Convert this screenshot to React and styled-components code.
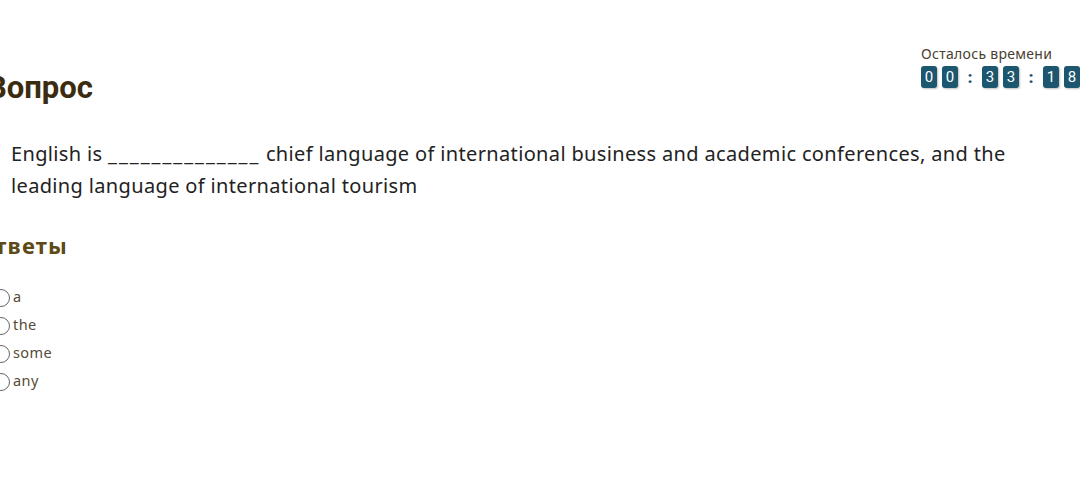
import styled, { createGlobalStyle } from 'styled-components'

const GlobalStyle = createGlobalStyle`
    html, body {
        margin: 0;
        padding: 0;
        background: #fff;
        overflow: hidden;
    }
    body {
        font-family: "Noto Sans", "Liberation Sans", sans-serif;
    }
`

const Pagina = styled.main`
    margin-left: -10px;
    width: 1090px;
    padding-top: 45px;
`

const Cabecalho = styled.header`
    display: flex;
    justify-content: space-between;
    align-items: flex-start;
`

const Titulo = styled.h2`
    font-family: Roboto, "Liberation Sans", sans-serif;
    font-weight: 700;
    font-size: 31px;
    line-height: 40px;
    color: #3b2c0f;
    margin: 23px 0 0 -3px;
`

const Cronometro = styled.div`
    display: flex;
    flex-direction: column;
    width: 159px;
`

const Rotulo = styled.span`
    font-size: 14px;
    line-height: 18px;
    color: #4a4030;
    margin-bottom: 3px;
    letter-spacing: 0.3px;
`

const Digitos = styled.div`
    display: flex;
    align-items: center;
`

const Digito = styled.span`
    width: 16px;
    height: 22px;
    margin-right: ${props => props.$ultimo ? '0' : '5px'};
    border-radius: 3px;
    background: #1c566f;
    color: #fff;
    font-family: Roboto, sans-serif;
    font-size: 15px;
    display: flex;
    align-items: center;
    justify-content: center;
    box-shadow: 1px 1px 2px rgba(0, 0, 0, 0.25);
`

const DoisPontos = styled.span`
    width: 24px;
    margin-left: -5px;
    text-align: center;
    font-family: Roboto, sans-serif;
    font-weight: 900;
    font-size: 17px;
    color: #1c566f;
`

const Pergunta = styled.p`
    margin: 30px 0 0 21px;
    width: 1040px;
    font-size: 20px;
    line-height: 32px;
    letter-spacing: 0.35px;
    color: #222;
`

const Lacuna = styled.span`
    letter-spacing: 2px;
`

const Subtitulo = styled.h3`
    font-weight: 700;
    font-size: 22px;
    line-height: 26px;
    letter-spacing: 1.2px;
    color: #5e4a17;
    margin: 30px 0 0 -13px;
`

const Respostas = styled.ul`
    list-style: none;
    margin: 24px 0 0 0;
    padding: 0 0 0 2px;
`

const Resposta = styled.li`
    display: flex;
    align-items: center;
    height: 28px;
    font-size: 14.5px;
    letter-spacing: 0.4px;
    color: #554a35;
`

const Radio = styled.span`
    width: 16px;
    height: 16px;
    border: 1px solid #666;
    border-radius: 50%;
    margin-right: 3px;
    margin-top: 4px;
    flex-shrink: 0;
`

const tempo = [['0', '0'], ['3', '3'], ['1', '8']]
const opcoes = ['a', 'the', 'some', 'any']

function App() {
    return (
        <Pagina>
            <GlobalStyle />
            <Cabecalho>
                <Titulo>Вопрос</Titulo>
                <Cronometro>
                    <Rotulo>Осталось времени</Rotulo>
                    <Digitos>
                        {tempo.map((par, i) => (
                            <>
                                {i > 0 && <DoisPontos>:</DoisPontos>}
                                <Digito>{par[0]}</Digito>
                                <Digito $ultimo={i === tempo.length - 1}>{par[1]}</Digito>
                            </>
                        ))}
                    </Digitos>
                </Cronometro>
            </Cabecalho>
            <Pergunta>
                English is <Lacuna>______________</Lacuna> chief language of international business and academic conferences, and the leading language of international tourism
            </Pergunta>
            <Subtitulo>Ответы</Subtitulo>
            <Respostas>
                {opcoes.map(opcao => (
                    <Resposta key={opcao}>
                        <Radio />
                        {opcao}
                    </Resposta>
                ))}
            </Respostas>
        </Pagina>
    )
}

export default App
